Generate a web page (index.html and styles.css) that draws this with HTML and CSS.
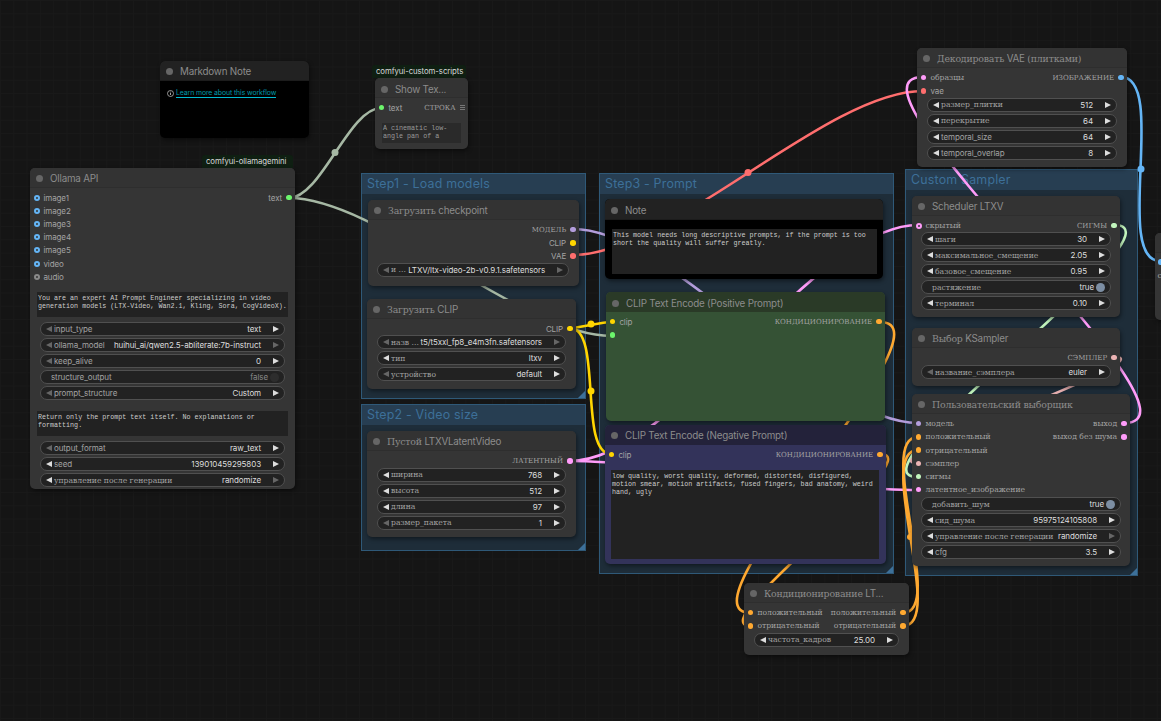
FILE: index.html
```html
<!DOCTYPE html>
<html lang="ru">
<head>
<meta charset="utf-8">
<title>ComfyUI LTX Workflow</title>
<link rel="stylesheet" href="styles.css">
</head>
<body>
<main class="canvas">

  <section class="group g-step1"><h2>Step1 - Load models</h2><b class="grip"></b></section>
  <section class="group g-step2"><h2>Step2 - Video size</h2><b class="grip"></b></section>
  <section class="group g-step3"><h2>Step3 - Prompt</h2><b class="grip"></b></section>
  <section class="group g-sampler"><h2>Custom Sampler</h2><b class="grip"></b></section>

  <svg class="links" width="1161" height="721" viewBox="0 0 1161 721" aria-hidden="true">
    <g class="l-text">
      <path d="M289 198C321 198 349 108 381 108"/>
      <path d="M289 198C377 198 523 336 611 336"/>
      <circle cx="335" cy="152.500" r="3.500"/>
    </g>
    <g class="l-model"><path d="M573 229C672 229 819 423 918 423"/></g>
    <g class="l-vae">
      <path d="M573 255C670 255 826 91 923 91"/>
      <circle cx="748" cy="172.500" r="3.500"/>
    </g>
    <g class="l-latent">
      <path d="M570 461C675 461 813 225 918 225"/>
      <path d="M570 461C657 461 831 490 918 490"/>
      <path d="M1124 423C1224 423 823 77 923 77"/>
    </g>
    <g class="l-sigma"><path d="M1114 225C1194 225 838 477 918 477"/></g>
    <g class="l-sampler"><path d="M1114 357C1170 357 862 463 918 463"/></g>
    <g class="l-cond">
      <path d="M880 322C960 322 671 613 751 613"/>
      <path d="M880 454C934 454 697 626 751 626"/>
      <path d="M903 613C947 613 874 437 918 437"/>
      <path d="M903 626C947 626 874 450 918 450"/>
      <circle cx="910" cy="537" r="3"/>
    </g>
    <g class="l-clip">
      <path d="M570 328C580 328 601 322 611 322"/>
      <path d="M570 328C603 328 578 454 611 454"/>
      <circle cx="591" cy="324" r="3.500"/>
      <circle cx="591" cy="391" r="3.500"/>
    </g>
    <g class="l-image">
      <path d="M1121 77C1168 77 1113 261 1160 261"/>
      <circle cx="1141" cy="169" r="3.500"/>
    </g>
  </svg>

  <div class="badge b-scripts">comfyui-custom-scripts</div>
  <div class="badge b-ollama">comfyui-ollamagemini</div>

  <article class="node black n-markdown">
    <header class="title"><i class="dot"></i><span>Markdown Note</span></header>
    <div class="md-body">
      <svg class="info" width="7" height="7" viewBox="0 0 7 7" aria-hidden="true"><circle cx="3.500" cy="3.500" r="3" fill="none" stroke="#ccc" stroke-width=".7"/><path d="M3.500 3v2M3.500 1.700v.7" stroke="#ccc" stroke-width=".8"/></svg>
      <a class="md-link" href="#">Learn more about this workflow</a>
    </div>
  </article>

  <article class="node n-show">
    <header class="title"><i class="dot"></i><span>Show Tex...</span></header>
    <div class="slots">
      <div class="row"><i class="sock text"></i><span>text</span><span class="r ru up">СТРОКА</span><b class="menu"></b></div>
    </div>
    <div class="box box-show">A cinematic low-angle pan of a</div>
  </article>

  <article class="node n-ollama">
    <header class="title"><i class="dot"></i><span>Ollama API</span></header>
    <div class="slots">
      <div class="row"><i class="sock ring image"></i><span>image1</span><span class="r">text</span><i class="sock text"></i></div>
      <div class="row"><i class="sock ring image"></i><span>image2</span></div>
      <div class="row"><i class="sock ring image"></i><span>image3</span></div>
      <div class="row"><i class="sock ring image"></i><span>image4</span></div>
      <div class="row"><i class="sock ring image"></i><span>image5</span></div>
      <div class="row"><i class="sock ring image"></i><span>video</span></div>
      <div class="row"><i class="sock ring grey"></i><span>audio</span></div>
    </div>
    <div class="box box-ollama first">You are an expert AI Prompt Engineer specializing in video generation models (LTX-Video, Wan2.1, Kling, Sora, CogVideoX).</div>
    <div class="widgets">
      <div class="w"><i class="al dim"></i><span>input_type</span><em>text</em><i class="ar"></i></div>
      <div class="w"><i class="al dim"></i><span>ollama_model</span><em>huihui_ai/qwen2.5-abliterate:7b-instruct</em><i class="ar dim"></i></div>
      <div class="w"><i class="al dim"></i><span>keep_alive</span><em>0</em><i class="ar"></i></div>
      <div class="w tog"><span>structure_output</span><em class="off">false</em><i class="knob off"></i></div>
      <div class="w"><i class="al dim"></i><span>prompt_structure</span><em>Custom</em><i class="ar"></i></div>
    </div>
    <div class="box box-ollama second">Return only the prompt text itself. No explanations or formatting.</div>
    <div class="widgets">
      <div class="w"><i class="al dim"></i><span>output_format</span><em>raw_text</em><i class="ar"></i></div>
      <div class="w"><i class="al"></i><span>seed</span><em>139010459295803</em><i class="ar"></i></div>
      <div class="w"><i class="al"></i><span class="ru">управление после генерации</span><em>randomize</em><i class="ar dim"></i></div>
    </div>
  </article>

  <article class="node n-ckpt">
    <header class="title"><i class="dot"></i><span><span class="ru">Загрузить</span> checkpoint</span></header>
    <div class="slots">
      <div class="row"><span class="r ru up">МОДЕЛЬ</span><i class="sock model"></i></div>
      <div class="row"><span class="r">CLIP</span><i class="sock clip"></i></div>
      <div class="row"><span class="r">VAE</span><i class="sock vae"></i></div>
    </div>
    <div class="widgets">
      <div class="w"><i class="al dim"></i><span class="ru">и ...</span><em>LTXV/ltx-video-2b-v0.9.1.safetensors</em><i class="ar dim"></i></div>
    </div>
  </article>

  <article class="node n-clip">
    <header class="title"><i class="dot"></i><span><span class="ru">Загрузить</span> CLIP</span></header>
    <div class="slots">
      <div class="row"><span class="r">CLIP</span><i class="sock clip"></i></div>
    </div>
    <div class="widgets">
      <div class="w"><i class="al dim"></i><span class="ru">назв ...</span><em>t5/t5xxl_fp8_e4m3fn.safetensors</em><i class="ar dim"></i></div>
      <div class="w"><i class="al"></i><span class="ru">тип</span><em>ltxv</em><i class="ar"></i></div>
      <div class="w"><i class="al dim"></i><span class="ru">устройство</span><em>default</em><i class="ar"></i></div>
    </div>
  </article>

  <article class="node n-latent">
    <header class="title"><i class="dot"></i><span><span class="ru">Пустой</span> LTXVLatentVideo</span></header>
    <div class="slots tall">
      <div class="row"><span class="r ru up">ЛАТЕНТНЫЙ</span><i class="sock latent"></i></div>
    </div>
    <div class="widgets">
      <div class="w"><i class="al"></i><span class="ru">ширина</span><em>768</em><i class="ar"></i></div>
      <div class="w"><i class="al"></i><span class="ru">высота</span><em>512</em><i class="ar"></i></div>
      <div class="w"><i class="al"></i><span class="ru">длина</span><em>97</em><i class="ar"></i></div>
      <div class="w"><i class="al dim"></i><span class="ru">размер_пакета</span><em>1</em><i class="ar"></i></div>
    </div>
  </article>

  <article class="node black n-note">
    <header class="title"><i class="dot"></i><span>Note</span></header>
    <div class="note-body"><div class="box box-note">This model needs long descriptive prompts, if the prompt is too short the quality will suffer greatly.</div></div>
  </article>

  <article class="node green n-pos">
    <header class="title"><i class="dot"></i><span>CLIP Text Encode (Positive Prompt)</span></header>
    <div class="slots">
      <div class="row"><i class="sock clip"></i><span>clip</span><span class="r ru up">КОНДИЦИОНИРОВАНИЕ</span><i class="sock cond"></i></div>
      <div class="row"><i class="sock text"></i></div>
    </div>
  </article>

  <article class="node navy n-neg">
    <header class="title"><i class="dot"></i><span>CLIP Text Encode (Negative Prompt)</span></header>
    <div class="slots">
      <div class="row"><i class="sock clip"></i><span>clip</span><span class="r ru up">КОНДИЦИОНИРОВАНИЕ</span><i class="sock cond"></i></div>
    </div>
    <div class="box box-neg">low quality, worst quality, deformed, distorted, disfigured, motion smear, motion artifacts, fused fingers, bad anatomy, weird hand, ugly</div>
  </article>

  <article class="node n-cond">
    <header class="title"><i class="dot"></i><span><span class="ru">Кондиционирование</span> LT...</span></header>
    <div class="slots">
      <div class="row"><i class="sock cond"></i><span class="ru">положительный</span><span class="r ru">положительный</span><i class="sock cond"></i></div>
      <div class="row"><i class="sock cond"></i><span class="ru">отрицательный</span><span class="r ru">отрицательный</span><i class="sock cond"></i></div>
    </div>
    <div class="widgets">
      <div class="w"><i class="al"></i><span class="ru">частота_кадров</span><em>25.00</em><i class="ar"></i></div>
    </div>
  </article>

  <article class="node n-vae">
    <header class="title"><i class="dot"></i><span><span class="ru">Декодировать</span> VAE <span class="ru">(плитками)</span></span></header>
    <div class="slots">
      <div class="row"><i class="sock latent"></i><span class="ru">образцы</span><span class="r ru up">ИЗОБРАЖЕНИЕ</span><i class="sock image"></i></div>
      <div class="row"><i class="sock vae"></i><span>vae</span></div>
    </div>
    <div class="widgets">
      <div class="w"><i class="al"></i><span class="ru">размер_плитки</span><em>512</em><i class="ar"></i></div>
      <div class="w"><i class="al"></i><span class="ru">перекрытие</span><em>64</em><i class="ar"></i></div>
      <div class="w"><i class="al"></i><span>temporal_size</span><em>64</em><i class="ar"></i></div>
      <div class="w"><i class="al"></i><span>temporal_overlap</span><em>8</em><i class="ar"></i></div>
    </div>
  </article>

  <article class="node n-sched">
    <header class="title"><i class="dot"></i><span>Scheduler LTXV</span></header>
    <div class="slots">
      <div class="row"><i class="sock ring latent"></i><span class="ru">скрытый</span><span class="r ru up">СИГМЫ</span><i class="sock sigma"></i></div>
    </div>
    <div class="widgets">
      <div class="w"><i class="al"></i><span class="ru">шаги</span><em>30</em><i class="ar"></i></div>
      <div class="w"><i class="al"></i><span class="ru">максимальное_смещение</span><em>2.05</em><i class="ar"></i></div>
      <div class="w"><i class="al"></i><span class="ru">базовое_смещение</span><em>0.95</em><i class="ar"></i></div>
      <div class="w tog"><span class="ru">растяжение</span><em>true</em><i class="knob"></i></div>
      <div class="w"><i class="al"></i><span class="ru">терминал</span><em>0.10</em><i class="ar"></i></div>
    </div>
  </article>

  <article class="node n-select">
    <header class="title"><i class="dot"></i><span><span class="ru">Выбор</span> KSampler</span></header>
    <div class="slots">
      <div class="row"><span class="r ru up">СЭМПЛЕР</span><i class="sock sampler"></i></div>
    </div>
    <div class="widgets">
      <div class="w"><i class="al dim"></i><span class="ru">название_сэмплера</span><em>euler</em><i class="ar"></i></div>
    </div>
  </article>

  <article class="node n-custom">
    <header class="title"><i class="dot"></i><span class="ru">Пользовательский выборщик</span></header>
    <div class="slots">
      <div class="row"><i class="sock model"></i><span class="ru">модель</span><span class="r ru">выход</span><i class="sock latent"></i></div>
      <div class="row"><i class="sock cond"></i><span class="ru">положительный</span><span class="r ru">выход без шума</span><i class="sock latent"></i></div>
      <div class="row"><i class="sock cond"></i><span class="ru">отрицательный</span></div>
      <div class="row"><i class="sock sampler"></i><span class="ru">сэмплер</span></div>
      <div class="row"><i class="sock sigma"></i><span class="ru">сигмы</span></div>
      <div class="row"><i class="sock latent"></i><span class="ru">латентное_изображение</span></div>
    </div>
    <div class="widgets">
      <div class="w tog"><span class="ru">добавить_шум</span><em>true</em><i class="knob"></i></div>
      <div class="w"><i class="al"></i><span class="ru">сид_шума</span><em>95975124105808</em><i class="ar"></i></div>
      <div class="w"><i class="al"></i><span class="ru">управление после генерации</span><em>randomize</em><i class="ar dim"></i></div>
      <div class="w"><i class="al"></i><span>cfg</span><em>3.5</em><i class="ar"></i></div>
    </div>
  </article>

  <article class="node n-edge">
    <header class="title"></header>
    <div class="slots edge-slots">
      <div class="row"><i class="sock image"></i></div>
      <div class="row"><span class="ru">с</span></div>
    </div>
  </article>

</main>
</body>
</html>
```
FILE: styles.css
```css
* { box-sizing: border-box; }
html, body { margin: 0; height: 100%; overflow: hidden; background: #151515; }

.canvas {
  position: relative;
  width: 1161px;
  height: 721px;
  overflow: hidden;
  background-color: #151515;
  background-image:
    linear-gradient(#191919 1px, transparent 1px),
    linear-gradient(90deg, #191919 1px, transparent 1px);
  background-size: 13.300px 13.300px;
  font-family: "Inter", "Liberation Sans", sans-serif;
}

/* groups */
.group {
  position: absolute;
  background: #1e2d39;
  border: 1px solid #2f5978;
  overflow: hidden;
}
.group h2 {
  margin: 0;
  height: 20px;
  padding-left: 5px;
  background: #273e52;
  color: #3d7099;
  font-size: 12.400px;
  font-weight: 400;
  line-height: 20px;
  letter-spacing: .2px;
}
.grip {
  position: absolute;
  right: 0;
  bottom: 0;
  border-style: solid;
  border-width: 0 0 7px 7px;
  border-color: transparent transparent #3d7099 transparent;
}
.g-step1 { left: 361px; top: 173px; width: 225px; height: 226px; }
.g-step2 { left: 361px; top: 404px; width: 225px; height: 147px; }
.g-step3 { left: 599px; top: 173px; width: 295px; height: 401px; }
.g-sampler { left: 905px; top: 169px; width: 233px; height: 407px; }

/* links */
.links { position: absolute; left: 0; top: 0; }
.links path { fill: none; stroke-width: 2.600; }
.l-text path { stroke: #a6b8a4; } .l-text circle { fill: #a6b8a4; }
.l-model path { stroke: #b39ddb; }
.l-vae path { stroke: #ff6e6e; } .l-vae circle { fill: #ff6e6e; }
.l-latent path { stroke: #ff9cf9; }
.l-sigma path { stroke: #c2f5bd; }
.l-sampler path { stroke: #ecb4b4; }
.l-cond path { stroke: #ffa931; } .l-cond circle { fill: #ffa931; }
.l-clip path { stroke: #ffd500; } .l-clip circle { fill: #ffd500; }
.l-image path { stroke: #64b5f6; } .l-image circle { fill: #64b5f6; }

/* badges */
.badge {
  position: absolute;
  height: 13px;
  padding: 0 4px;
  background: #0f1f12;
  border-radius: 3px 3px 0 0;
  color: #d8d8d8;
  font-size: 7.800px;
  letter-spacing: -.08px;
  line-height: 13px;
  white-space: nowrap;
}
.b-scripts { left: 372px; top: 65px; width: 94px; }
.b-ollama { left: 202px; top: 155px; width: 91px; }

/* nodes */
.node {
  position: absolute;
  display: flex;
  flex-direction: column;
  background: #353535;
  border-radius: 5px;
  box-shadow: 1px 2px 4px rgba(0, 0, 0, .45);
  color: #a3a3a3;
  font-size: 8px;
  letter-spacing: -.1px;
  overflow: hidden;
}
.title {
  display: flex;
  flex: none;
  align-items: center;
  gap: 7px;
  height: 20px;
  padding: 2px 0 0 6px;
  background: #333;
  border-bottom: 1px solid #2e2e2e;
  color: #8c8c8c;
  font-size: 9.800px;
  letter-spacing: -.2px;
  white-space: nowrap;
}
.dot { flex: none; width: 7px; height: 7px; border-radius: 50%; background: #666; }
.ru {
  font-family: "DejaVu Serif", "Liberation Serif", serif;
  font-size: 7.650px;
  letter-spacing: 0;
}
.title .ru { font-size: 9.400px; letter-spacing: -.2px; }
.ru.up { font-size: 7px; }

.n-markdown { left: 160px; top: 61px; width: 149px; height: 77px; }
.n-show { left: 375px; top: 78px; width: 93px; height: 71px; }
.n-ollama { left: 30px; top: 168px; width: 265px; height: 321px; }
.n-ckpt { left: 368px; top: 200px; width: 211px; height: 86px; }
.n-clip { left: 367px; top: 299px; width: 209px; height: 90px; }
.n-latent { left: 367px; top: 431px; width: 209px; height: 106px; }
.n-note { left: 605px; top: 199px; width: 278px; height: 80px; }
.n-pos { left: 606px; top: 292px; width: 279px; height: 129px; }
.n-neg { left: 605px; top: 425px; width: 281px; height: 139px; }
.n-cond { left: 744px; top: 583px; width: 165px; height: 72px; }
.n-vae { left: 917px; top: 48px; width: 210px; height: 119px; }
.n-sched { left: 912px; top: 196px; width: 208px; height: 121px; }
.n-select { left: 912px; top: 328px; width: 208px; height: 58px; }
.n-custom { left: 912px; top: 394px; width: 218px; height: 172px; }
.n-edge { left: 1155px; top: 233px; width: 40px; height: 87px; }

.n-sched .title, .n-select .title, .n-custom .title { padding-top: 1px; }
.n-show .title { padding-top: 3px; }

.black { background: #000; }
.black .title { background: #222; border-bottom-color: #1c1c1c; }
.n-note .title { height: 21px; padding-top: 2px; }
.green { background: #355235; }
.green .title { padding-top: 3px; background: #2a3a27; border-bottom-color: #2a3a27; }
.navy { background: #33335a; }
.navy .title { padding-top: 2px; background: #23223a; border-bottom-color: #23223a; }

/* slots */
.slots { flex: none; padding: 3.200px 3.500px 0 4px; }
.slots.tall { padding-top: 3.500px; }
.n-ollama .slots { padding-top: 3px; }
.edge-slots { padding-top: 2.400px; padding-left: 2.500px; }
.row {
  display: flex;
  align-items: center;
  gap: 4px;
  height: 13.200px;
  white-space: nowrap;
}
.r { margin-left: auto; }
.sock { flex: none; width: 5.400px; height: 5.400px; border-radius: 50%; background: #888; }
.sock.image { background: #64b5f6; }
.sock.grey { background: #8a8a8a; }
.sock.text { background: #6cf56c; }
.sock.model { background: #b39ddb; }
.sock.clip { background: #ffd500; }
.sock.vae { background: #ff6e6e; }
.sock.latent { background: #ff9cf9; }
.sock.cond { background: #ffa931; }
.sock.sigma { background: #c2f5bd; }
.sock.sampler { background: #ecb4b4; }
.sock.ring {
  width: 6px;
  height: 6px;
  margin-right: -.6px;
  background: #353535;
  border: 2px solid #64b5f6;
}
.sock.ring.grey { border-color: #8a8a8a; }
.sock.ring.latent { border-color: #ff9cf9; }
.menu {
  flex: none;
  width: 5px;
  height: 5px;
  border-top: 1px solid #777;
  border-bottom: 1px solid #777;
  background: linear-gradient(#777, #777) center / 100% 1px no-repeat;
}

/* widgets */
.widgets {
  display: flex;
  flex: none;
  flex-direction: column;
  gap: 2px;
  margin: 0 10px;
}
.n-ckpt .widgets { margin-left: 9px; }
.n-sched .widgets { margin: 0 9px; }
.n-select .widgets { margin: .8px 9px 0; }
.n-custom .widgets { margin: .8px 9px 0; }
.w {
  display: flex;
  flex: none;
  align-items: center;
  height: 14px;
  padding: 0 5px;
  background: #222;
  border: 1px solid #505050;
  border-radius: 7px;
  white-space: nowrap;
  color: #a3a3a3;
}
.w span { flex: none; margin-left: 2px; }
.w em {
  flex: 1;
  min-width: 0;
  margin-right: 12px;
  color: #ddd;
  font-style: normal;
  text-align: right;
}
.al, .ar { flex: none; width: 0; height: 0; border-style: solid; border-color: transparent; }
.al { border-width: 3.500px 6px 3.500px 0; border-right-color: #ddd; }
.ar { border-width: 3.500px 0 3.500px 6px; border-left-color: #ddd; }
.al.dim { border-right-color: #666; }
.ar.dim { border-left-color: #666; }
.tog { padding-left: 8px; padding-right: 5px; }
.tog em { margin-right: 2px; }
.tog em.off { color: #888; }
.knob { flex: none; width: 9px; height: 9px; border-radius: 50%; background: #7c8ea3; }
.knob.off { background: #2d2d2d; }

/* text boxes */
.box {
  flex: none;
  padding: 2px 1px;
  background: #222;
  color: #ccc;
  font-family: "Liberation Mono", "DejaVu Sans Mono", monospace;
  font-size: 6.700px;
  letter-spacing: 0;
  line-height: 8px;
}
.box-ollama { height: 25px; margin: 8.800px 7px 5px; }
.box-ollama.second { margin-top: 11px; }
.box-show { height: 20px; margin: 8.600px 7px 0; padding-top: 1px; background: #2a2a2a; color: #999; line-height: 8.500px; }
.box-neg { height: 89px; margin: 9px 7px 0 6px; }
.note-body { flex: 1; padding: 9px 6px 5px 7px; }
.box-note { height: 45px; }

/* markdown */
.md-body { display: flex; align-items: center; gap: 2px; padding: 7px 7px 0; }
.info { flex: none; }
.md-link {
  color: #009aa8;
  font-size: 6.900px;
  line-height: 9px;
  text-decoration: none;
  border-bottom: 1px solid #00bcd4;
}
```
